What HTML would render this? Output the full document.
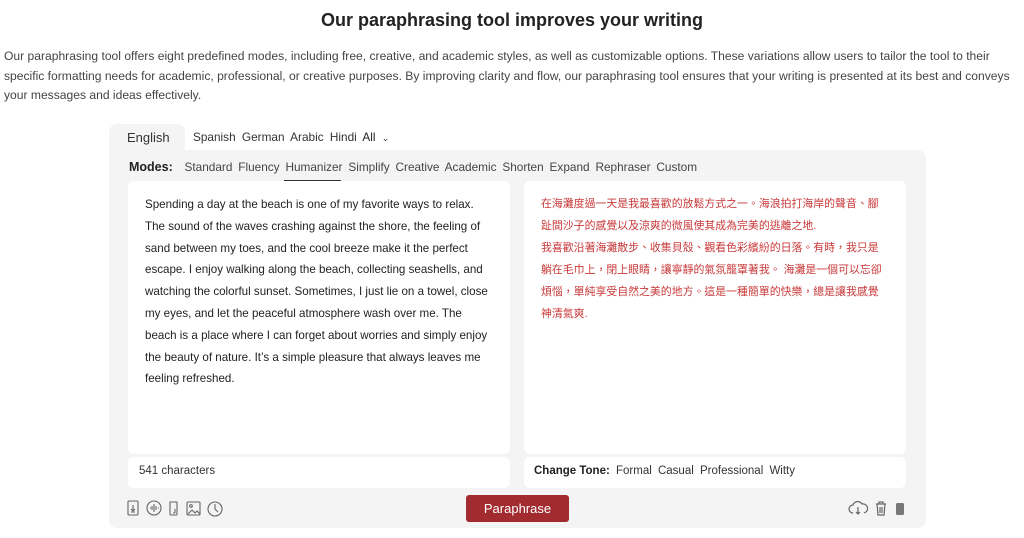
<!DOCTYPE html>
<html><head><meta charset="utf-8"><style>
*{margin:0;padding:0;box-sizing:border-box}
body{width:1024px;height:538px;background:#fff;font-family:"Liberation Sans",sans-serif;color:#333;position:relative;overflow:hidden}
.abs{position:absolute}
h1{position:absolute;top:10px;left:0;width:1024px;text-align:center;font-size:18px;font-weight:bold;color:#222}
.p{left:4px;top:47px;width:1022px;font-size:12.1px;line-height:19.6px;color:#444;white-space:nowrap}
.tab{left:109px;top:124px;width:76px;height:30px;background:#f4f4f4;border-radius:8px 8px 0 0;font-size:13px;padding:6px 0 0 18px;color:#333}
.langs{left:193px;top:130px;font-size:11.8px;color:#333;word-spacing:3px}
.panel{left:109px;top:150px;width:817px;height:378px;background:#f4f4f4;border-radius:0 8px 8px 8px}
.modes{left:129px;top:160px;font-size:11.8px;color:#444;word-spacing:2.6px}
.modes b{color:#222;font-size:12.5px}
.ul{left:284px;top:180px;width:57px;height:2px;background:#333}
.box{background:#fff;border-radius:6px}
.txt{left:145px;top:194px;width:350px;font-size:11.6px;line-height:21.8px;color:#222}
.zh{left:541px;top:193px;width:380px;font-size:10.9px;line-height:22px;color:#c9393a;font-family:"Liberation Sans","Noto Sans CJK TC",sans-serif;letter-spacing:0;white-space:nowrap}
.foot{font-size:11.5px;color:#333}
.btn{left:466px;top:495px;width:103px;height:27px;background:#a22b2f;border-radius:3px;color:#fff;font-size:13px;text-align:center;line-height:27px}
svg{position:absolute}
</style></head><body>
<h1>Our paraphrasing tool improves your writing</h1>
<div class="abs p">Our paraphrasing tool offers eight predefined modes, including free, creative, and academic styles, as well as customizable options. These variations allow users to tailor the tool to their<br>specific formatting needs for academic, professional, or creative purposes. By improving clarity and flow, our paraphrasing tool ensures that your writing is presented at its best and conveys<br>your messages and ideas effectively.</div>
<div class="abs panel"></div>
<div class="abs tab">English</div>
<div class="abs langs">Spanish German Arabic Hindi <span style="color:#222">All</span> <span style="font-size:9px">&#8964;</span></div>
<div class="abs modes"><b>Modes:</b>&nbsp; Standard Fluency Humanizer Simplify Creative Academic Shorten Expand Rephraser Custom</div>
<div class="abs ul"></div>
<div class="abs box" style="left:128px;top:181px;width:382px;height:273px"></div>
<div class="abs box" style="left:128px;top:457px;width:382px;height:31px"></div>
<div class="abs box" style="left:524px;top:181px;width:382px;height:273px"></div>
<div class="abs box" style="left:524px;top:457px;width:382px;height:31px"></div>
<div class="abs txt">Spending a day at the beach is one of my favorite ways to relax. The sound of the waves crashing against the shore, the feeling of sand between my toes, and the cool breeze make it the perfect escape. I enjoy walking along the beach, collecting seashells, and watching the colorful sunset. Sometimes, I just lie on a towel, close my eyes, and let the peaceful atmosphere wash over me. The beach is a place where I can forget about worries and simply enjoy the beauty of nature. It’s a simple pleasure that always leaves me feeling refreshed.</div>
<div class="abs zh">在海灘度過一天是我最喜歡的放鬆方式之一。海浪拍打海岸的聲音、腳<br>趾間沙子的感覺以及涼爽的微風使其成為完美的逃離之地.<br>我喜歡沿著海灘散步、收集貝殼、觀看色彩繽紛的日落。有時，我只是<br>躺在毛巾上，閉上眼睛，讓寧靜的氣氛籠罩著我。 海灘是一個可以忘卻<br>煩惱，單純享受自然之美的地方。這是一種簡單的快樂，總是讓我感覺<br>神清氣爽.</div>
<div class="abs foot" style="left:139px;top:465px">541 characters</div>
<div class="abs foot" style="left:534px;top:465px;word-spacing:3px"><b style="color:#222;word-spacing:0">Change Tone:</b> Formal Casual Professional Witty</div>
<div class="abs btn">Paraphrase</div>
<svg style="left:126px;top:499px" width="100" height="20" fill="none" stroke="#666" stroke-width="1.1">
<rect x="2" y="2" width="10" height="14" rx="1"/><path d="M7 6v6M5 10l2 2 2-2M5 13h4"/>
<circle cx="28" cy="9" r="7"/><path d="M24 9h1M26 7v4M28 5v8M30 7v4M32 9h1"/>
<path d="M44 3h7v12a1 1 0 0 1-1 1h-5a1 1 0 0 1-1-1zM49 10v4M49 14h-2"/>
<rect x="61" y="3" width="13" height="13" rx="1"/><circle cx="65" cy="7" r="1.3"/><path d="M62 15l4-4 3 3 2-2 3 3"/>
<circle cx="89" cy="10" r="7"/><path d="M89 5v5l3 3"/>
</svg>
<svg style="left:848px;top:499px" width="62" height="20" fill="none" stroke="#666" stroke-width="1.2">
<path d="M5 14a4 4 0 0 1 0-8 5 5 0 0 1 9-1 4 4 0 0 1 2 9M10 8v7M8 13l2 2 2-2"/>
<path d="M28 5h10M31 5V3h4v2M29 5l1 11h6l1-11M32 8v6M34 8v6"/>
<rect x="48" y="4" width="8" height="12" rx="1.5" fill="#777" stroke="none"/>
</svg>
</body></html>
